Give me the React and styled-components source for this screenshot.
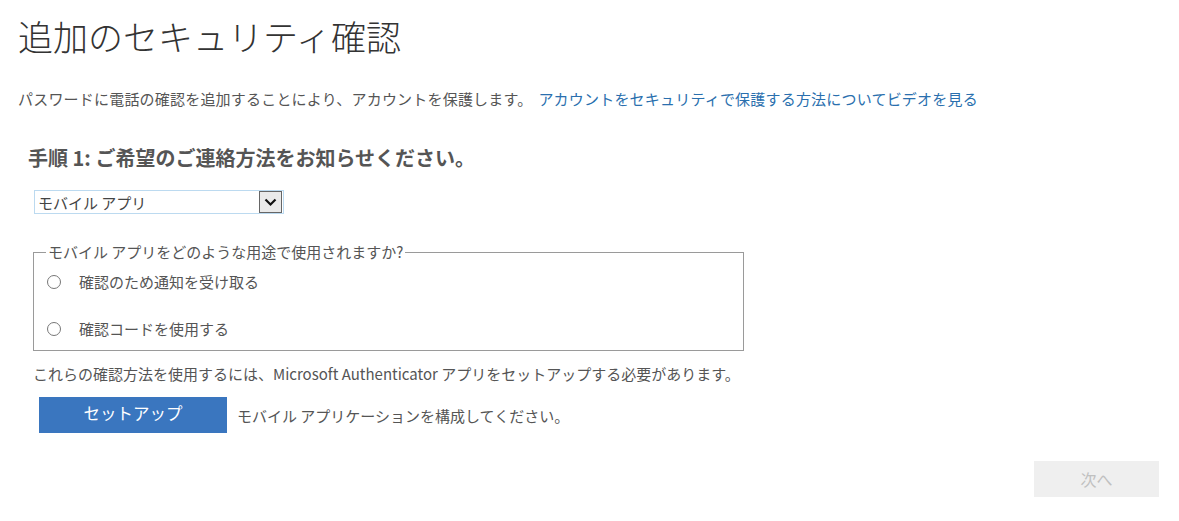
import React from "react";
import styled, { createGlobalStyle } from "styled-components";

const GlobalStyle = createGlobalStyle`
  body {
    margin: 0;
    background: #fff;
    font-family: "Noto Sans CJK JP", "Noto Sans", sans-serif;
    color: #555;
  }
`;

const Page = styled.div`
  width: 1179px;
  height: 521px;
  padding: 14px 20px 0 18px;
  box-sizing: border-box;
  display: flex;
  flex-direction: column;
`;

const Title = styled.h1`
  margin: 0;
  font-size: 35px;
  font-weight: 300;
  color: #333;
  line-height: 44px;
`;

const Intro = styled.p`
  margin: 30px 0 0;
  font-size: 15px;
  line-height: 22px;
  color: #555;
  letter-spacing: 0.2px;

  a {
    color: #2a6fae;
    text-decoration: none;
    margin-left: 6px;
  }
`;

const Step = styled.h2`
  margin: 36px 0 0 10px;
  font-size: 20px;
  font-weight: 700;
  color: #555;
  line-height: 24px;
`;

const SelectRow = styled.div`
  margin: 20px 0 0 16px;
  display: flex;
`;

const Select = styled.div`
  width: 250px;
  height: 24px;
  box-sizing: border-box;
  border: 1px solid #bcdaf0;
  display: flex;
  align-items: center;
  justify-content: space-between;
  font-size: 15px;
  color: #444;
  padding-left: 3px;
`;

const Arrow = styled.span`
  width: 23px;
  height: 22px;
  box-sizing: border-box;
  border: 1px solid #666;
  background: #eaeaea;
  display: flex;
  align-items: center;
  justify-content: center;
  margin-right: 1px;
`;

const Usage = styled.fieldset`
  margin: 30px 0 0 15px;
  width: 711px;
  box-sizing: border-box;
  border: 1px solid #9a9a9a;
  padding: 10px 12px 9px 13px;
  display: flex;
  flex-direction: column;
  gap: 23px;
  min-width: 0;

  legend {
    font-size: 15px;
    color: #555;
    padding: 0 2px;
    margin-left: -1px;
    line-height: 16px;
  }
`;

const Option = styled.label`
  display: flex;
  align-items: center;
  gap: 18px;
  font-size: 15px;
  color: #555;
  line-height: 24px;
`;

const Radio = styled.span`
  width: 14px;
  height: 14px;
  border: 1px solid #777;
  border-radius: 50%;
  box-sizing: border-box;
  flex: none;
`;

const Note = styled.p`
  margin: 12px 0 0 15px;
  font-size: 15px;
  line-height: 22px;
  color: #555;
`;

const SetupRow = styled.div`
  margin: 12px 0 0 21px;
  display: flex;
  align-items: center;
  gap: 10px;
  font-size: 15px;
  color: #555;
`;

const PrimaryButton = styled.button`
  width: 188px;
  height: 36px;
  border: none;
  background: #3a76bf;
  color: #fff;
  font-family: inherit;
  font-size: 16.5px;
  padding: 0 0 4px;
`;

const Footer = styled.div`
  margin-top: 28px;
  display: flex;
  justify-content: flex-end;
`;

const NextButton = styled.button`
  width: 125px;
  height: 36px;
  border: none;
  background: #efefef;
  color: #c0c0c0;
  font-family: inherit;
  font-size: 16px;
`;

export default function App() {
  return (
    <>
      <GlobalStyle />
      <Page>
        <Title>追加のセキュリティ確認</Title>
        <Intro>
          パスワードに電話の確認を追加することにより、アカウントを保護します。
          <a href="#">アカウントをセキュリティで保護する方法についてビデオを見る</a>
        </Intro>
        <Step>手順 1: ご希望のご連絡方法をお知らせください。</Step>
        <SelectRow>
          <Select>
            モバイル アプリ
            <Arrow>
              <svg width="13" height="9" viewBox="0 0 13 9">
                <path d="M1.5 1.5 L6.5 6.5 L11.5 1.5" fill="none" stroke="#111" strokeWidth="2.2" />
              </svg>
            </Arrow>
          </Select>
        </SelectRow>
        <Usage>
          <legend>モバイル アプリをどのような用途で使用されますか?</legend>
          <Option>
            <Radio />
            確認のため通知を受け取る
          </Option>
          <Option>
            <Radio />
            確認コードを使用する
          </Option>
        </Usage>
        <Note>これらの確認方法を使用するには、Microsoft Authenticator アプリをセットアップする必要があります。</Note>
        <SetupRow>
          <PrimaryButton>セットアップ</PrimaryButton>
          モバイル アプリケーションを構成してください。
        </SetupRow>
        <Footer>
          <NextButton>次へ</NextButton>
        </Footer>
      </Page>
    </>
  );
}
